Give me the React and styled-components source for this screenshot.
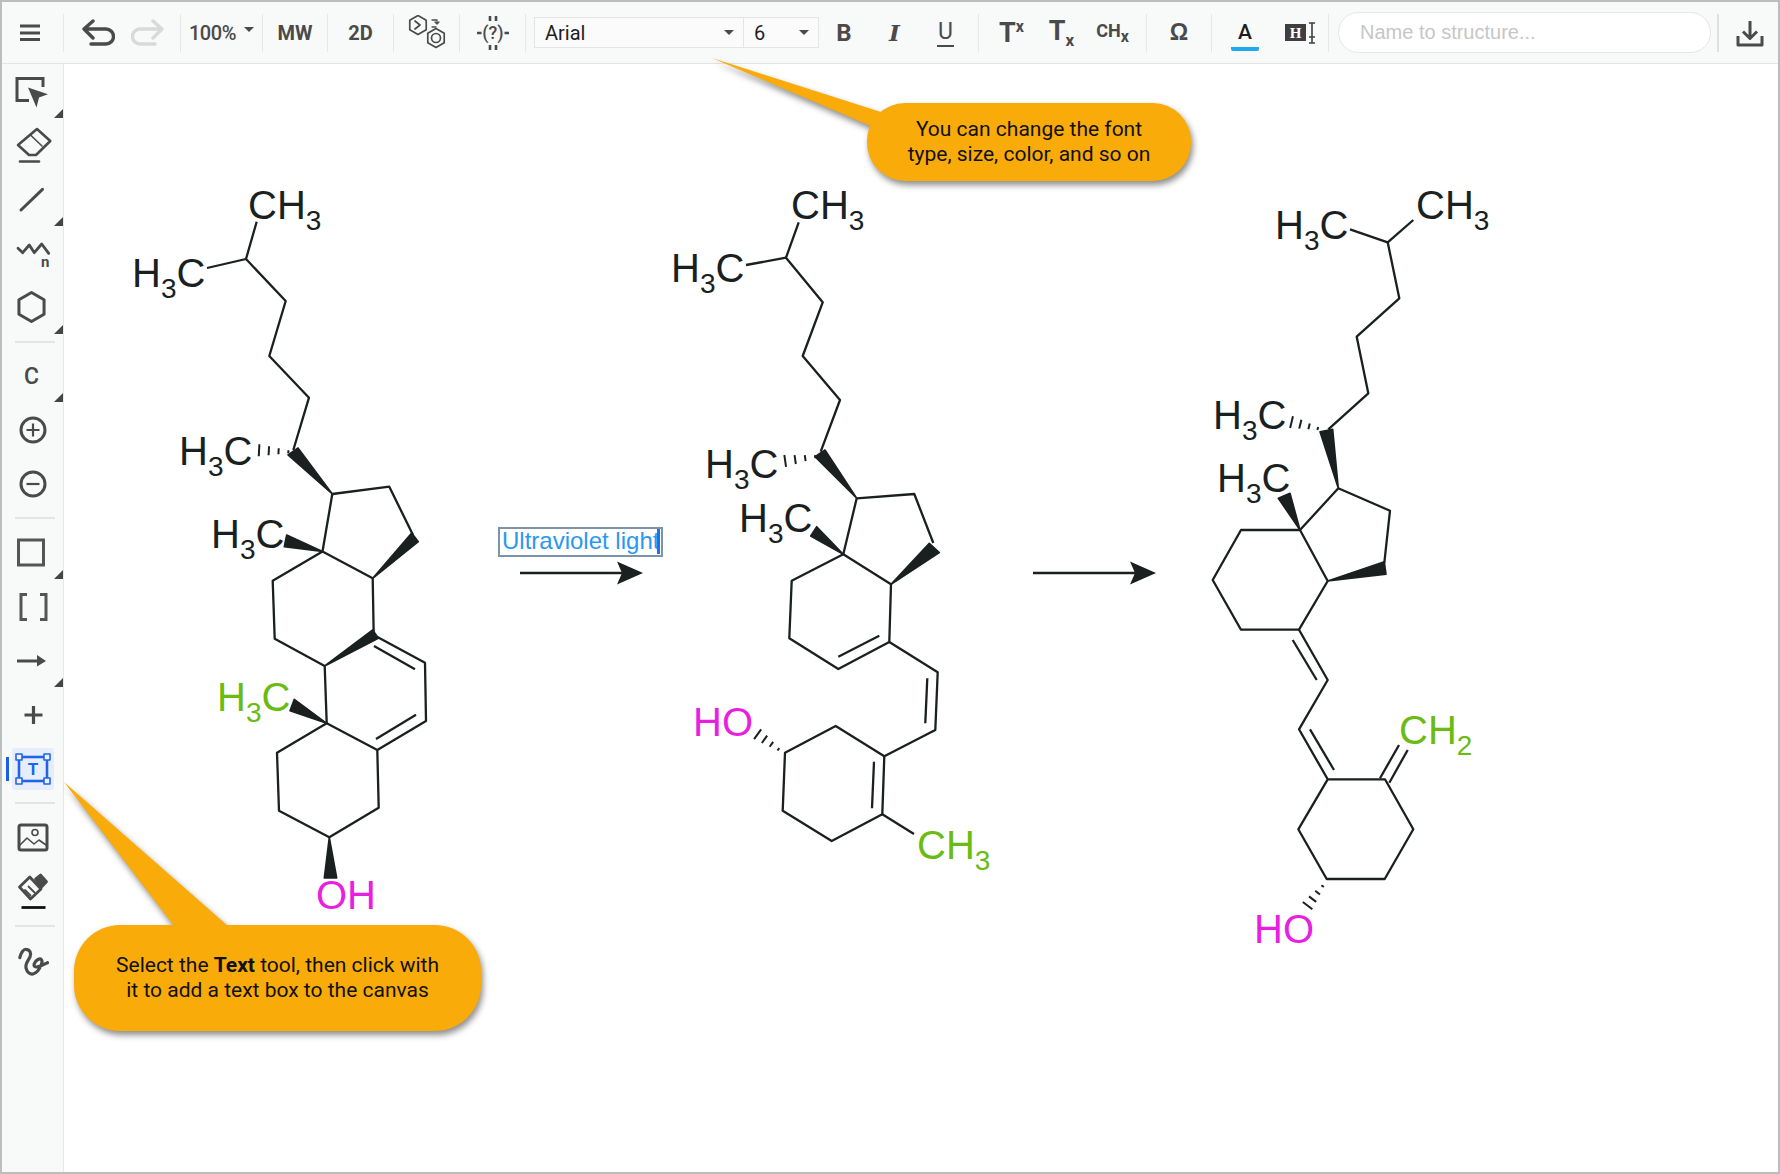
import React from 'react'
import styled, { createGlobalStyle } from 'styled-components'

const GlobalStyle = createGlobalStyle`
  html, body { margin: 0; padding: 0; background: #fff; }
  body { font-family: Roboto, "Liberation Sans", sans-serif; }
`

const Frame = styled.div`
  box-sizing: border-box;
  width: 1780px;
  height: 1174px;
  border: 2px solid #bcbebe;
  display: grid;
  grid-template-rows: 62px 1fr;
  overflow: hidden;
`

const Toolbar = styled.header`
  display: flex;
  align-items: center;
  background: #f8f9f9;
  border-bottom: 1px solid #e3e4e4;
  color: #4a4a4a;
`

const Cell = styled.div`
  flex: none;
  width: ${p => p.$w}px;
  height: 100%;
  display: flex;
  align-items: center;
  justify-content: center;
  font-weight: ${p => p.$weight || 700};
  font-size: ${p => p.$size || 20}px;
  letter-spacing: ${p => p.$track || 0}px;
`

const DownloadCell = styled(Cell)`
  justify-content: flex-end;
  padding-right: 13px;
  box-sizing: border-box;
`

const Sep = styled.span`
  flex: none;
  width: ${p => p.$thick ? 2 : 1}px;
  height: 38px;
  margin-left: ${p => p.$ml || 0}px;
  background: ${p => p.$thick ? '#dfe0e0' : '#e6e7e7'};
`

const Caret = styled.i`
  display: inline-block;
  width: 0;
  height: 0;
  margin-left: ${p => p.$ml || 8}px;
  margin-bottom: 6px;
  border-left: 5px solid transparent;
  border-right: 5px solid transparent;
  border-top: 5px solid #4a4a4a;
`

const Select = styled.div`
  flex: none;
  box-sizing: border-box;
  width: ${p => p.$w}px;
  height: 31px;
  margin-left: ${p => p.$ml}px;
  padding: 0 9px 0 10px;
  display: flex;
  align-items: center;
  justify-content: space-between;
  background: #fbfbfb;
  border: 1px solid #e4e5e5;
  font-size: 20px;
  color: #1f1f1f;
  ${Caret} { margin-bottom: 0; }
`

const SerifGlyph = styled.span`
  font-family: "DejaVu Serif", serif;
  font-style: italic;
  font-size: 23px;
`

const UnderGlyph = styled.span`
  font-weight: 400;
  font-size: 23px;
  line-height: 26px;
  padding: 0 1px;
  border-bottom: 2px solid #4a4a4a;
`

const Sup = styled.span`
  font-size: ${p => p.$size || 15}px;
  vertical-align: ${p => p.$shift}px;
`

const Omega = styled.span`
  font-family: "Liberation Sans", sans-serif;
  font-size: 23px;
`

const ColorGlyph = styled.span`
  font-size: 21px;
  font-weight: 500;
  color: #1d1d1d;
  padding: 0 7px 3px;
  border-bottom: 4px solid #1ca9ee;
  border-radius: 2px;
  line-height: 24px;
  margin-top: 6px;
`

const NameInput = styled.div`
  flex: none;
  box-sizing: border-box;
  width: 373px;
  height: 41px;
  margin: 0 6px 0 9px;
  padding-left: 21px;
  display: flex;
  align-items: center;
  background: #fff;
  border: 1px solid #e5e6e6;
  border-radius: 21px;
  font-family: "Liberation Sans", sans-serif;
  font-size: 20px;
  color: #c6c6c6;
`

const Body = styled.div`
  display: grid;
  grid-template-columns: 62px 1fr;
  min-height: 0;
`

const Sidebar = styled.aside`
  background: #f8f9f9;
  border-right: 1px solid #e6e7e7;
  padding-top: 1px;
  color: #4a4a4a;
`

const Tool = styled.div`
  position: relative;
  height: 54px;
  display: flex;
  align-items: center;
  justify-content: center;

  ${p => p.$corner && `
    &::after {
      content: '';
      position: absolute;
      right: 0;
      bottom: 1px;
      width: 9px;
      height: 9px;
      background: #454545;
      clip-path: polygon(100% 0, 100% 100%, 0 100%);
    }
  `}

  ${p => p.$active && `
    &::before {
      content: '';
      position: absolute;
      left: 4px;
      top: 15px;
      width: 3px;
      height: 24px;
      background: #1a5fe8;
    }
  `}
`

const ActiveBox = styled.div`
  width: 42px;
  height: 42px;
  border-radius: 3px;
  background: #e6eefb;
  display: flex;
  align-items: center;
  justify-content: center;
`

const CarbonGlyph = styled.span`
  font-size: 23px;
  font-weight: 500;
  margin-right: 2px;
`

const SideSep = styled.div`
  height: 2px;
  margin: 6px 8px ${p => p.$mb || 6}px 13px;
  background: #e3e4e4;
`

const Canvas = styled.main`
  position: relative;
  background: #fff;
  min-width: 0;
`

const ChemSvg = styled.svg`
  display: block;
  width: 100%;
  height: 100%;
`

const Atom = styled.text`
  font-family: "Liberation Sans", Arial, sans-serif;
  font-size: 40px;
  fill: ${p => p.$color || '#1a1f1f'};
`

const AtomSub = styled.tspan`
  font-size: 28px;
`

const TextBox = styled.div`
  position: absolute;
  left: 434px;
  top: 463px;
  box-sizing: border-box;
  width: 165px;
  height: 30px;
  padding-left: 2px;
  border: 2px solid #7d93ab;
  font-family: "Liberation Sans", Arial, sans-serif;
  font-size: 24px;
  line-height: 24px;
  white-space: nowrap;
  color: #2a98f0;

  &::after {
    content: '';
    position: absolute;
    left: 157px;
    top: 0;
    width: 3px;
    height: 25px;
    background: #1f6fee;
  }
`

const CalloutWrap = styled.div`
  position: absolute;
  left: ${p => p.$left}px;
  top: ${p => p.$top}px;
  width: ${p => p.$w}px;
  height: ${p => p.$h}px;
  filter: drop-shadow(2px 4px 3px rgba(0, 0, 0, 0.45));
`

const CalloutTail = styled.svg`
  position: absolute;
  left: 0;
  top: 0;
  width: 1px;
  height: 1px;
  overflow: visible;
`

const CalloutBody = styled.div`
  position: relative;
  box-sizing: border-box;
  width: 100%;
  height: 100%;
  display: flex;
  align-items: center;
  justify-content: center;
  text-align: center;
  background: #f9ab0a;
  border-radius: ${p => p.$radius}px;
  font-size: 21px;
  line-height: 25px;
  color: #111;
`

const Bold = styled.b`
  font-weight: 700;
`

// chemistry data is all in page coordinates, the svg viewBox starts at the canvas corner
const molecules = [
  {
    chains: [
      '256.7,221.7 246,259 285.7,301 269.3,356 309,397.7 293.3,450',
      '207,268 246,259',
      '332.3,494 389.3,486.7 413,535',
      '332.3,494 322.5,551.5 372.7,578.3 373.7,635 425,662.7 426,721 377.3,750 378.7,807.7 329.3,837.3 279,810.7 277,752.7 326.7,723.3 377.3,750',
      '322.5,551.5 272.7,580.7 274.7,638.7 324.7,666 326.7,723.3',
      '374,646 415,669.3',
      '416,714.7 376,739',
    ],
    wedges: [
      [332.3, 494, 288, 455, 298, 448],
      [372.7, 578.3, 411.7, 533, 418.3, 541.7],
      [322.5, 551.5, 286.7, 535, 284.3, 546.7],
      [324.7, 666, 372.7, 630, 378.3, 638.3],
      [326.7, 723.3, 294.3, 699.3, 290, 710.7],
      [329.3, 837.3, 324.3, 878, 336.7, 878],
    ],
    hashes: [[293, 452, 254, 450]],
    atoms: [
      { x: 248, y: 219, text: 'CH', sub: '3' },
      { x: 132, y: 287, text: 'H', sub: '3', tail: 'C' },
      { x: 179, y: 465, text: 'H', sub: '3', tail: 'C' },
      { x: 211, y: 548, text: 'H', sub: '3', tail: 'C' },
      { x: 217, y: 711, text: 'H', sub: '3', tail: 'C', color: '#6abb12' },
      { x: 316, y: 909, text: 'OH', color: '#e91fe0' },
    ],
  },
  {
    chains: [
      '798.7,222.3 786,257.7 822.7,302.3 802.7,356 840,400 820.7,451.7',
      '746,265 786,257.7',
      '856.7,498.3 914.3,494 933.3,543',
      '856.7,498.3 843.3,554.3 891,584.3 889.3,642 838.3,669 789.3,638.3 791.7,580.7 843.3,554.3',
      '838.3,656.7 879.3,635.7',
      '889.3,642 937.7,672.3 935.3,730 884.3,756.3 835.7,726 785,752.7 782.7,810.7 831.7,841 882.3,814.3 884.3,756.3',
      '927.3,678.3 925.3,723.3',
      '874,761.7 872,808.3',
      '882.3,814.3 914,834',
    ],
    wedges: [
      [856.7, 498.3, 815, 456.7, 825, 450],
      [891, 584.3, 929.3, 543.3, 939.3, 552.7],
      [843.3, 554.3, 816.7, 526.7, 810.7, 536],
    ],
    hashes: [[820, 456, 780, 461.7], [781.7, 751.7, 754, 731.7]],
    atoms: [
      { x: 791, y: 219, text: 'CH', sub: '3' },
      { x: 671, y: 282, text: 'H', sub: '3', tail: 'C' },
      { x: 705, y: 478, text: 'H', sub: '3', tail: 'C' },
      { x: 739, y: 532, text: 'H', sub: '3', tail: 'C' },
      { x: 693, y: 736, text: 'HO', color: '#e91fe0' },
      { x: 917, y: 859, text: 'CH', sub: '3', color: '#6abb12' },
    ],
  },
  {
    chains: [
      '1413.3,220 1387.7,242.3 1399.3,298.3 1356.7,336.7 1368.3,393.3 1328.3,429.3',
      '1350,229.3 1387.7,242.3',
      '1338.3,488.3 1390,510.7 1384.3,563',
      '1338.3,488.3 1300,530 1327.7,581 1299,629.7 1241,629.7 1212.7,580 1241,530 1300,530',
      '1299,629.7 1327.7,680 1299,729.3 1327.7,779.3 1385,779.3 1413.3,829.3 1384.7,879 1326.7,879 1298.3,829.3 1327.7,779.3',
      '1292.7,640 1316.7,680',
      '1310,729.3 1334,770',
      '1380,778.3 1399,745',
      '1389.3,782.7 1407.7,750',
    ],
    wedges: [
      [1338.3, 488.3, 1320, 431.7, 1332.7, 429.3],
      [1300, 530, 1278.3, 498.3, 1290, 493.3],
      [1327.7, 581, 1384.3, 561.7, 1386, 574.3],
    ],
    hashes: [[1322, 429.5, 1287, 421], [1325, 883, 1305, 909]],
    atoms: [
      { x: 1416, y: 219, text: 'CH', sub: '3' },
      { x: 1275, y: 239, text: 'H', sub: '3', tail: 'C' },
      { x: 1213, y: 429, text: 'H', sub: '3', tail: 'C' },
      { x: 1217, y: 492, text: 'H', sub: '3', tail: 'C' },
      { x: 1399, y: 744, text: 'CH', sub: '2', color: '#6abb12' },
      { x: 1254, y: 943, text: 'HO', color: '#e91fe0' },
    ],
  },
]

const hashLines = ([x1, y1, x2, y2]) => {
  const dx = x2 - x1
  const dy = y2 - y1
  const len = Math.hypot(dx, dy)
  const nx = -dy / len
  const ny = dx / len
  return [0.12, 0.37, 0.62, 0.87].map(f => {
    const half = 0.8 + 6 * f
    const cx = x1 + dx * f
    const cy = y1 + dy * f
    return [cx + nx * half, cy + ny * half, cx - nx * half, cy - ny * half]
  })
}

const AtomLabel = ({ x, y, text, sub, tail, color }) => (
  <Atom x={x} y={y} $color={color}>
    {text}
    {sub && <AtomSub dy="10.5">{sub}</AtomSub>}
    {tail && <tspan dy="-10.5">{tail}</tspan>}
  </Atom>
)

const Molecule = ({ chains, wedges, hashes, atoms }) => (
  <g>
    <g fill="none" stroke="#1a1f1f" strokeWidth="2.3" strokeLinejoin="round">
      {chains.map((pts, i) => <polyline key={i} points={pts} />)}
    </g>
    <g fill="#1a1f1f" stroke="#1a1f1f" strokeWidth="1.6" strokeLinejoin="round">
      {wedges.map(([a, b, c, d, e, f], i) => (
        <polygon key={i} points={`${a},${b} ${c},${d} ${e},${f}`} />
      ))}
    </g>
    <g stroke="#1a1f1f" strokeWidth="2">
      {hashes.flatMap((h, i) => hashLines(h).map(([x1, y1, x2, y2], j) => (
        <line key={`${i}-${j}`} x1={x1} y1={y1} x2={x2} y2={y2} />
      )))}
    </g>
    {atoms.map((a, i) => <AtomLabel key={i} {...a} />)}
  </g>
)

const ReactionArrow = ({ x1, x2, y }) => (
  <g fill="#1a1f1f">
    <line x1={x1} y1={y} x2={x2 - 20} y2={y} stroke="#1a1f1f" strokeWidth="2.6" />
    <polygon points={`${x2},${y} ${x2 - 26},${y - 11.5} ${x2 - 21},${y} ${x2 - 26},${y + 11.5}`} />
  </g>
)

const Icon = ({ w = 44, h = 44, color = '#4a4a4a', sw = 3, children }) => (
  <svg width={w} height={h} viewBox={`0 0 ${w} ${h}`} fill="none" stroke={color} strokeWidth={sw} strokeLinecap="round" strokeLinejoin="round">
    {children}
  </svg>
)

const hexPoints = (cx, cy, r) =>
  [0, 1, 2, 3, 4, 5].map(i => {
    const a = (Math.PI / 3) * i - Math.PI / 2
    return `${cx + r * Math.cos(a)},${cy + r * Math.sin(a)}`
  }).join(' ')

const iconFont = { fontFamily: 'Roboto, sans-serif', fontWeight: 700, stroke: 'none' }

const ToolbarRow = () => (
  <Toolbar>
    <Cell $w={56}>
      <Icon w={24} h={20} sw={3.2}>
        <path d="M2 3H22M2 10H22M2 16.500H22" strokeLinecap="butt" />
      </Icon>
    </Cell>
    <Sep $ml={5} />
    <Cell $w={67}>
      <Icon w={34} h={30} sw={3.4}>
        <path d="M12 3 3 11 12 20M3 11H25a7.500 7.500 0 0 1 0 15H10" />
      </Icon>
    </Cell>
    <Cell $w={34}>
      <Icon w={34} h={30} sw={3.4} color="#d8d9d9">
        <path d="M22 3 31 11 22 20M31 11H9a7.500 7.500 0 0 0 0 15H24" />
      </Icon>
    </Cell>
    <Sep $ml={15} />
    <Cell $w={81} $weight={500} $size={20} $track={-0.4}>100%<Caret /></Cell>
    <Sep />
    <Cell $w={64}>MW</Cell>
    <Sep />
    <Cell $w={65}>2D</Cell>
    <Sep />
    <Cell $w={65}>
      <Icon w={40} h={36} sw={1.7}>
        <polygon points={hexPoints(11, 10, 9.500)} />
        <path d="M8 6 13 10 8 14" />
        <polygon points={hexPoints(29, 23, 9.500)} />
        <circle cx="29" cy="23" r="4.500" />
        <path d="M25 5H30V9M32 7 30 9 28 7M29 12 25 12" strokeWidth="1.300" />
      </Icon>
    </Cell>
    <Sep />
    <Cell $w={65}>
      <Icon w={36} h={36} sw={2.6}>
        <path d="M15 1V6M21 1V6M15 30V35M21 30V35M2 18H6.500M29.500 18H34" strokeLinecap="butt" />
        <text x="18" y="24" fontSize="18" textAnchor="middle" fill="#4a4a4a" style={{ ...iconFont, fontWeight: 500 }}>(?)</text>
      </Icon>
    </Cell>
    <Sep />
    <Select $w={210} $ml={8}>Arial<Caret /></Select>
    <Select $w={76} $ml={-1}>6<Caret /></Select>
    <Cell $w={50} $size={24}>B</Cell>
    <Cell $w={51}><SerifGlyph>I</SerifGlyph></Cell>
    <Cell $w={51}><UnderGlyph>U</UnderGlyph></Cell>
    <Sep $ml={7} />
    <Cell $w={65} $size={27}><span>T<Sup $shift={10} $size={16}>x</Sup></span></Cell>
    <Cell $w={35} $size={27}><span>T<Sup $shift={-6} $size={17}>x</Sup></span></Cell>
    <Cell $w={67} $size={18}><span>CH<Sup $shift={-5} $size={16}>x</Sup></span></Cell>
    <Sep />
    <Cell $w={64}><Omega>Ω</Omega></Cell>
    <Sep />
    <Cell $w={66}><ColorGlyph>A</ColorGlyph></Cell>
    <Cell $w={43}>
      <Icon w={32} h={24} sw={1.6} color="#3f3f3f">
        <rect x="1" y="3" width="21" height="17" fill="#3f3f3f" stroke="none" />
        <text x="11.500" y="17" fontSize="15" textAnchor="middle" fill="#fff" style={{ ...iconFont, fontFamily: '"Liberation Serif", serif' }}>H</text>
        <path d="M25 2H31M28 2V22M25 22H31M25 16H31" strokeLinecap="butt" />
      </Icon>
    </Cell>
    <Sep $ml={7} />
    <NameInput>Name to structure...</NameInput>
    <Sep $thick />
    <DownloadCell $w={58}>
      <Icon w={28} h={28} sw={3}>
        <path d="M14 2V19M7 12.500 14 19.500 21 12.500M2 17V26H26V17" strokeLinecap="butt" />
      </Icon>
    </DownloadCell>
  </Toolbar>
)

const ToolRail = () => (
  <Sidebar>
    <Tool $corner>
      <Icon>
        <path d="M18 30.500H6V8.500H32V17" strokeLinecap="butt" strokeLinejoin="miter" />
        <polygon points="17,17.500 37,24.300 28,27.500 25.500,37.500" fill="#4a4a4a" stroke="none" />
      </Icon>
    </Tool>
    <Tool>
      <Icon sw={2.6}>
        <polygon points="26,5 39.300,17 25,31 18,31 7,21" />
        <path d="M19.500 11 31 22" strokeWidth="1.600" />
        <path d="M9 37.500H28" />
      </Icon>
    </Tool>
    <Tool $corner>
      <Icon><path d="M10 32 31.500 11.300" /></Icon>
    </Tool>
    <Tool>
      <Icon sw={2.8}>
        <polyline points="7,16.300 11.700,20.700 18.300,13 23.300,20.700 30.700,12 37.700,21.300" />
        <text x="30" y="35" fontSize="15" fill="#4a4a4a" style={iconFont}>n</text>
      </Icon>
    </Tool>
    <Tool $corner>
      <Icon><polygon points={hexPoints(20.500, 21, 14.500)} /></Icon>
    </Tool>
    <SideSep />
    <Tool $corner><CarbonGlyph>C</CarbonGlyph></Tool>
    <Tool>
      <Icon>
        <circle cx="22" cy="22" r="12" />
        <path d="M15.500 22H28.500M22 15.500V28.500" strokeWidth="2.200" strokeLinecap="butt" />
      </Icon>
    </Tool>
    <Tool>
      <Icon>
        <circle cx="22" cy="22" r="12" />
        <path d="M15.500 22H28.500" strokeWidth="2.200" strokeLinecap="butt" />
      </Icon>
    </Tool>
    <SideSep $mb={7} />
    <Tool $corner>
      <Icon color="#555"><rect x="7.500" y="9" width="25" height="25" strokeLinejoin="miter" /></Icon>
    </Tool>
    <Tool>
      <Icon color="#555"><path d="M16 9.500H10V34.500H16M29 9.500H35V34.500H29" strokeLinejoin="miter" strokeLinecap="butt" /></Icon>
    </Tool>
    <Tool $corner>
      <Icon>
        <path d="M6 22H27" strokeLinecap="butt" />
        <polygon points="26,16 35,22 26,27.500" fill="#4a4a4a" stroke="none" />
      </Icon>
    </Tool>
    <Tool>
      <Icon sw={3.2}><path d="M13.500 22H31.500M22.500 13V31" strokeLinecap="butt" /></Icon>
    </Tool>
    <Tool $active>
      <ActiveBox>
        <Icon w={36} h={36} color="#2064ea" sw={2.6}>
          <rect x="4" y="6" width="28" height="24" strokeLinejoin="miter" />
          {[[4, 6], [32, 6], [4, 30], [32, 30]].map(([cx, cy]) => (
            <rect key={`${cx}-${cy}`} x={cx - 3} y={cy - 3} width="6" height="6" fill="#eef3fd" strokeWidth="1.600" />
          ))}
          <text x="18" y="24" fontSize="17" textAnchor="middle" fill="#2064ea" style={iconFont}>T</text>
        </Icon>
      </ActiveBox>
    </Tool>
    <SideSep $mb={7} />
    <Tool>
      <Icon>
        <rect x="8" y="9" width="28" height="25" rx="2" />
        <circle cx="24" cy="16.500" r="3" strokeWidth="1.600" />
        <path d="M9 29 16 22 23 28 28 24 35 29" strokeWidth="1.600" />
      </Icon>
    </Tool>
    <Tool>
      <Icon sw={2.8}>
        <polygon points="8.500,17 18.800,7 30,19 19.500,29" />
        <path d="M14 20 19.500 25.500M17.500 16.500 23.500 22.500" strokeWidth="1.800" />
        <polygon points="24.500,9 29.500,5 35.500,11.700 30.200,17.300" fill="#4a4a4a" />
        <path d="M10.500 37.500H34.500" stroke="#111" strokeLinecap="butt" />
      </Icon>
    </Tool>
    <SideSep />
    <Tool>
      <Icon sw={3.2}>
        <path d="M8.800 19.700C10 14 13 11 15 11.300 19 11.500 20.500 15 19 19 17 23 14 26 15 30 16 34 19 36.500 22 36 26 35 29 30 30.500 26 32 22 30 20 27 21.500 23 23.500 21.500 29 25 29 29 29 33 26 36.500 24.700" />
      </Icon>
    </Tool>
  </Sidebar>
)

const Callout = ({ left, top, w, h, radius, tail, children }) => (
  <CalloutWrap $left={left} $top={top} $w={w} $h={h}>
    <CalloutTail>
      <polygon points={tail} fill="#f9ab0a" />
    </CalloutTail>
    <CalloutBody $radius={radius}>{children}</CalloutBody>
  </CalloutWrap>
)

const App = () => (
  <>
    <GlobalStyle />
    <Frame>
      <ToolbarRow />
      <Body>
        <ToolRail />
        <Canvas>
          <ChemSvg viewBox="64 64 1714 1108" preserveAspectRatio="xMinYMin meet">
            {molecules.map((m, i) => <Molecule key={i} {...m} />)}
            <ReactionArrow x1={520} x2={643} y={573} />
            <ReactionArrow x1={1033} x2={1156} y={573} />
          </ChemSvg>
          <TextBox>Ultraviolet light</TextBox>
          <Callout left={803} top={39} w={324} h={78} radius={38} tail="-155,-45 14,9 0,41 20,30">
            <span>You can change the font<br />type, size, color, and so on</span>
          </Callout>
          <Callout left={10} top={861} w={407} h={106} radius={46} tail="-10,-143 154,1 100,1">
            <span>Select the <Bold>Text</Bold> tool, then click with<br />it to add a text box to the canvas</span>
          </Callout>
        </Canvas>
      </Body>
    </Frame>
  </>
)

export default App
